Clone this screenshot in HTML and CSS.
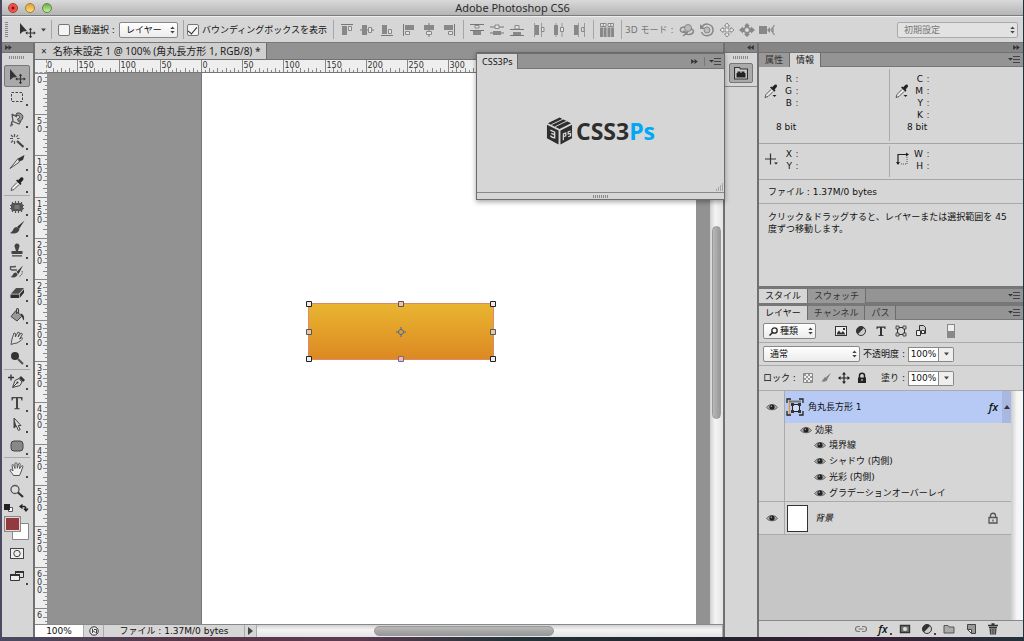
FILE: index.html
```html
<!DOCTYPE html>
<html lang="ja">
<head>
<meta charset="utf-8">
<title>Adobe Photoshop CS6</title>
<link rel="stylesheet" href="styles.css">
</head>
<body>
<svg class="defs" aria-hidden="true">
  <symbol id="i-move" viewBox="0 0 18 16"><path d="M2 1v11l3-2.600L9 9z" fill="#333"/><path d="M8.500 11h8M12.500 7v8" stroke="#333" stroke-width="1.200"/><path d="M12.500 5.800l-1.800 2h3.600zM12.500 16.200l-1.800-2h3.600zM7.300 11l2-1.800v3.600zM17.700 11l-2-1.800v3.600z" fill="#333"/></symbol>
  <symbol id="i-marquee" viewBox="0 0 18 16"><rect x="3.500" y="3.500" width="11" height="9" fill="none" stroke="#444" stroke-dasharray="2.500 1.500"/></symbol>
  <symbol id="i-lasso" viewBox="0 0 18 16"><path d="M4 3l5 3M4 3l1 7.500M5 10.500c-2 0-2 3 0 3.500M3.500 13l-1 2.500M5 10.500l6 2.500 2-3" fill="none" stroke="#555" stroke-width="1.300"/><path d="M7.500 4.500l1.500-2.500c7-1 8 7.500 1.500 8.500L9.500 8c3-1 2.500-4 .3-3.500z" fill="#999" stroke="#444"/></symbol>
  <symbol id="i-wand" viewBox="0 0 18 16"><path d="M9 8l6.500 6" stroke="#444" stroke-width="2.200"/><path d="M6.500 1v3M2 5.500h3M3 2l2 2M10 2L8.500 4M3 9.500l2-2M6.500 8v3M9 5.500h2.500" stroke="#555" stroke-width="1.200"/></symbol>
  <symbol id="i-slice" viewBox="0 0 18 16"><path d="M10 4.500L16.500 1l-1.500 5-4 1.500z" fill="#333"/><path d="M10 4.500L2 14.500 11.500 8z" fill="#e4e4e4" stroke="#555"/></symbol>
  <symbol id="i-dropper" viewBox="0 0 18 16"><path d="M9 6.500L4 11.500l-1 3 3-1 5-5" fill="#eee" stroke="#555"/><path d="M8 4.500l1.200-1 1 .8 2.300-2.600c2-1.500 4 .5 2.500 2.500L12.700 6.800l.8 1-1 1.200z" fill="#222"/></symbol>
  <symbol id="i-sample" viewBox="0 0 16 14"><path d="M8 5.500L3 10.500l-1 3 3-1 5-5" fill="#eee" stroke="#555"/><path d="M7 3.500l1.200-1 1 .8L11.300 1c2-1.500 3.500.5 2.200 2.200L11.700 5.500l.8 1-1 1.200z" fill="#222"/><path d="M9.500 11h4l-2 2z" fill="#222"/></symbol>
  <symbol id="i-heal" viewBox="0 0 18 16"><rect x="3" y="4" width="12" height="8" rx="2.500" fill="#555"/><path d="M4.500 3v10M7.500 2v12M10.500 2v12M13.500 3v10M2 6.500h14M2 9.500h14" stroke="#555" stroke-width="1.200"/><rect x="6.500" y="6" width="5" height="4" fill="#777"/></symbol>
  <symbol id="i-brush" viewBox="0 0 18 16"><path d="M16.500.5L9 7l2 2z" fill="#333"/><path d="M8.500 7c-3.500 0-2.500 4-6.500 6 4 1.500 9 0 9.500-4z" fill="#444"/></symbol>
  <symbol id="i-stamp" viewBox="0 0 18 16"><path d="M9 1.500a2.500 2.500 0 0 1 2.300 3.500L10 9h4.500v3h-11V9H8L6.700 5A2.500 2.500 0 0 1 9 1.500zM4 13.200h10v1.300H4z" fill="#444"/></symbol>
  <symbol id="i-history" viewBox="0 0 18 16"><path d="M15 1.500L8.500 8l2 2z" fill="#333"/><path d="M7.500 8.500c-2.500 0-2 3-5 4.500 4 1 6.500 0 7.300-3z" fill="#444"/><path d="M2 3l6-.5M3 6h6M2.500 2v4" fill="none" stroke="#555" stroke-width="1.300"/><path d="M14 7c1 3-1 5-3 5.500" fill="none" stroke="#555" stroke-dasharray="1.500 1"/></symbol>
  <symbol id="i-eraser" viewBox="0 0 18 16"><path d="M8 3h8l-5 5.700H3z" fill="#4c4c4c"/><path d="M2.500 9.500H11V13H2.500zM11.700 9.300l4.300-5v3.500L11.700 13z" fill="#2e2e2e"/></symbol>
  <symbol id="i-bucket" viewBox="0 0 18 16"><path d="M7.500 4L14 9l-5 5-6-4.500z" fill="#999" stroke="#444"/><path d="M8.500 7V3c0-2 2-2 2 0v3" fill="none" stroke="#444" stroke-width="1.200"/><path d="M12.500 6.500c3 .5 4 3 3.500 7-1.500-1-1.500-3.500-3.500-7z" fill="#333"/></symbol>
  <symbol id="i-smudge" viewBox="0 0 18 16"><path d="M3 15.500L4 10l2-6 1.500.5L7.300 8 10 3l1.700.8L10 8l3-4 1.600 1-3 5 2.400-1.500c1 .5.500 1.500-1 3l-4 2.500-3 .5z" fill="#ddd" stroke="#555"/></symbol>
  <symbol id="i-dodge" viewBox="0 0 18 16"><circle cx="7" cy="6" r="4" fill="#333"/><path d="M10 9l5 5" stroke="#555" stroke-width="2.200"/></symbol>
  <symbol id="i-pen" viewBox="0 0 18 16"><path d="M0 4.500h6M3 1.500v6" stroke="#333" stroke-width="1.300"/><path d="M4.500 14.500L7 7.500l4-2 3 3.500-2 3.500z" fill="#ddd" stroke="#444"/><path d="M11 5l2-2 4 4-2 2z" fill="#333"/><path d="M5 14l4-4" stroke="#444"/><circle cx="9.500" cy="9.500" r="1" fill="#333"/></symbol>
  <symbol id="i-type" viewBox="0 0 18 16"><path d="M3.500 2h11v3.500h-1L12.700 3.300H10V13l1.700.4v.8H6.300v-.8L8 13V3.300H5.300L4.500 5.500h-1z" fill="#444"/></symbol>
  <symbol id="i-typesmall" viewBox="0 0 12 12"><path d="M1.500 1.500h9V4h-.8L9 2.700H7V10l1.500.3v.7h-5v-.7L5 10V2.700H3L2.300 4h-.8z" fill="#333"/></symbol>
  <symbol id="i-select" viewBox="0 0 18 16"><path d="M6 2v10l2.400-2 2 4.500 1.800-.8-2-4.200H13z" fill="#ddd" stroke="#444"/><path d="M6 2v10l2.400-2z" fill="#444"/></symbol>
  <symbol id="i-rrect" viewBox="0 0 18 16"><rect x="3" y="3" width="12" height="10" rx="3" fill="#888" stroke="#444"/></symbol>
  <symbol id="i-hand" viewBox="0 0 18 16"><path d="M5.500 14.500c-1.500-3-3.500-4-3.500-5.500 1-1 2 0 3 1L4 4.500c0-1.300 1.500-1.300 1.800 0L7 7.500V2.700c0-1.400 1.800-1.400 2 0l.3 4.500L10.500 3c.5-1.200 2-.8 1.700.5l-.7 4.200L13.500 5c1-.8 1.800 0 1.300 1L13 11l-1.500 3.500z" fill="#eee" stroke="#555"/></symbol>
  <symbol id="i-zoom" viewBox="0 0 18 16"><circle cx="7" cy="6.500" r="4" fill="#ddd" stroke="#555" stroke-width="1.300"/><path d="M10 9.500l5 4.500" stroke="#333" stroke-width="2.200"/></symbol>
  <symbol id="i-mask" viewBox="0 0 18 16"><rect x="2.500" y="3.500" width="13" height="10" fill="#eee" stroke="#444"/><circle cx="9" cy="8.500" r="3.200" fill="none" stroke="#444"/></symbol>
  <symbol id="i-screen" viewBox="0 0 18 16"><path d="M7.500 3.500h8v6h-8z" fill="#ddd" stroke="#333"/><path d="M7 3h9v2H7z" fill="#333"/><path d="M2.500 6.500h9v6h-9z" fill="#eee" stroke="#333"/><path d="M2 6h10v2H2z" fill="#333"/></symbol>
  <symbol id="i-eye" viewBox="0 0 12 10"><path d="M.5 5.500C3 1.500 9 1.500 11.500 5.500 9 8.500 3 8.500.5 5.500z" fill="#aaa" stroke="#666"/><circle cx="6" cy="5" r="2.600" fill="#222"/><circle cx="5.300" cy="4.300" r=".8" fill="#aaa"/></symbol>
  <symbol id="i-menu" viewBox="0 0 13 9"><path d="M0 3h5L2.500 5.500z" fill="#333"/><path d="M5 1.500h7M5 4.500h7M5 7.500h7" stroke="#444"/></symbol>
  <symbol id="i-rr" viewBox="0 0 8 6"><path d="M0 0l4 3-4 3zM4 0l4 3-4 3z" fill="#333"/></symbol>
  <symbol id="i-ll" viewBox="0 0 8 6"><path d="M8 0L4 3l4 3zM4 0L0 3l4 3z" fill="#333"/></symbol>
  <symbol id="i-updown" viewBox="0 0 5 8"><path d="M.3 3h4.400L2.500 .5zM.3 5h4.400L2.500 7.500z" fill="#444"/></symbol>
  <symbol id="i-down" viewBox="0 0 5 4"><path d="M0 .5h5L2.500 3.500z" fill="#444"/></symbol>
  <symbol id="i-grip" viewBox="0 0 16 3"><path d="M0 1.500h16" stroke="#888" stroke-width="3" stroke-dasharray="1 1"/></symbol>
  <symbol id="i-align" viewBox="0 0 14 12"><path d="M1 .5h12" stroke="#777"/><path d="M2 2h5v9H2z" fill="#888"/><path d="M8.500 2.500h3v4h-3z" fill="#e4e4e4" stroke="#888"/></symbol>
  <symbol id="i-alignmid" viewBox="0 0 14 12"><path d="M0 6h14" stroke="#777"/><path d="M2 1h5v10H2z" fill="#888"/><path d="M8.500 3.500h3v5h-3z" fill="#e4e4e4" stroke="#888"/></symbol>
  <symbol id="i-dist" viewBox="0 0 14 12"><path d="M0 .5h14M0 6.500h14" stroke="#777"/><path d="M5 1.500h4v2.500H5z" fill="#e4e4e4" stroke="#888"/><path d="M3 7h8v4H3z" fill="#888"/></symbol>
  <symbol id="i-distmid" viewBox="0 0 14 12"><path d="M0 3h14M0 9h14" stroke="#777"/><path d="M5 1h4v3.500H5z" fill="#e4e4e4" stroke="#888"/><path d="M3 7h8v4H3z" fill="#888"/></symbol>
  <symbol id="i-distbot" viewBox="0 0 14 12"><path d="M0 5.500h14M0 11.500h14" stroke="#777"/><path d="M5 1.500h4v3.500H5z" fill="#e4e4e4" stroke="#888"/><path d="M3 8h8v3H3z" fill="#888"/></symbol>
  <symbol id="i-vdist" viewBox="0 0 12 14"><path d="M1.500 0v14M8.500 0v14" stroke="#999"/><path d="M2 2h4v10H2z" fill="#888"/><path d="M8.500 4.500h2.500v4H8.500z" fill="#e4e4e4" stroke="#888"/></symbol>
  <symbol id="i-vdistmid" viewBox="0 0 12 14"><path d="M3 0v14M9 0v14" stroke="#999"/><path d="M1 2h4v10H1z" fill="#888"/><path d="M7.500 4.500h3v4h-3z" fill="#e4e4e4" stroke="#888"/></symbol>
  <symbol id="i-vdistend" viewBox="0 0 12 14"><path d="M5.500 0v14M11.500 0v14" stroke="#999"/><path d="M1 2h4v10H1z" fill="#888"/><path d="M8.500 4.500H11v4H8.500z" fill="#e4e4e4" stroke="#888"/></symbol>
  <symbol id="i-auto" viewBox="0 0 14 14"><path d="M.5.500h5.500v3H.5zM8 .5h5.500v3H8zM3.300.5v3M10.800.5v3" fill="#e4e4e4" stroke="#888"/><path d="M0 4.500h3V14H0zM3.600 4.500h3V14h-3zM7.500 4.500h3V14h-3zM11.100 4.500H14V14h-2.900z" fill="#888"/></symbol>
  <symbol id="i-orbit" viewBox="0 0 16 14"><circle cx="9" cy="5" r="3.500" fill="#bbb" stroke="#888"/><path d="M6 4C0 4 0 9 5 9.500h4M12 6c4 1 3 5-2 5.500L6 11M4 8l4 2-4 3" fill="none" stroke="#888" stroke-width="1.500"/></symbol>
  <symbol id="i-roll" viewBox="0 0 16 14"><circle cx="8" cy="7" r="3" fill="#bbb" stroke="#888"/><path d="M3 4c3-5 11-3 11 3s-9 8-11.500 2" fill="none" stroke="#888" stroke-width="1.500"/><path d="M1 1v5h5z" fill="#888"/></symbol>
  <symbol id="i-pan" viewBox="0 0 16 14"><path d="M8 0l2.500 3H9v3h3V4.500L15 7l-3 2.500V8H9v3h1.500L8 14l-2.500-3H7V8H4v1.500L1 7l3-2.500V6h3V3H5.500z" fill="#eee" stroke="#888"/></symbol>
  <symbol id="i-slide" viewBox="0 0 16 14"><path d="M8 0l3 3H9.500l1.500 2h1V3.500L16 7l-4 3.500V9h-1l-1.500 2H11l-3 3-3-3h1.500L5 9H4v1.500L0 7l4-3.500V5h1l1.500-2H5z" fill="#888"/><circle cx="8" cy="7" r="2.500" fill="#ddd" stroke="#888"/></symbol>
  <symbol id="i-cam" viewBox="0 0 16 14"><path d="M0 3h8v8H0zM8 7l3-3v6z" fill="#888"/><path d="M15.500 2L12 7l3.500 5M14 5v4" fill="none" stroke="#888" stroke-width="1.200"/></symbol>
  <symbol id="i-pixel" viewBox="0 0 12 12"><rect x=".5" y="1.500" width="11" height="9" fill="#eee" stroke="#333"/><path d="M2 9.500V8l2-2.500L6 8l2-2 2.500 3.500zM8 3h2v2H8z" fill="#333"/></symbol>
  <symbol id="i-adjust" viewBox="0 0 12 12"><circle cx="6" cy="6" r="4.500" fill="#ccc" stroke="#333"/><path d="M2.800 9.200A4.500 4.500 0 0 1 9.200 2.800z" fill="#333"/></symbol>
  <symbol id="i-shape" viewBox="0 0 12 12"><path d="M2.500 2.500h7v7h-7z" fill="none" stroke="#333"/><path d="M1 1h3v3H1zM8 1h3v3H8zM1 8h3v3H1zM8 8h3v3H8z" fill="#ccc" stroke="#333" stroke-width=".8"/></symbol>
  <symbol id="i-smart" viewBox="0 0 12 12"><path d="M4.500.5h4l2 2v6h-6z" fill="#ccc" stroke="#333"/><path d="M1.500 5.500h4v5h-4zM6.500 5.500h3v3h-3z" fill="#eee" stroke="#333"/></symbol>
  <symbol id="i-checks" viewBox="0 0 12 12"><path d="M1.500 1.500h9v9h-9z" fill="#eee" stroke="#888"/><path d="M2 2h2v2H2zM6 2h2v2H6zM4 4h2v2H4zM8 4h2v2H8zM2 6h2v2H2zM6 6h2v2H6zM4 8h2v2H4zM8 8h2v2H8z" fill="#999"/></symbol>
  <symbol id="i-four" viewBox="0 0 12 12"><path d="M1 6h10M6 1v10" stroke="#222" stroke-width="1.200"/><path d="M6 0L4 2.500h4zM6 12L4 9.500h4zM0 6l2.500-2v4zM12 6L9.500 4v4z" fill="#222"/></symbol>
  <symbol id="i-lock" viewBox="0 0 12 12"><path d="M3.500 6V3.500c0-3 5-3 5 0V6" fill="none" stroke="#222" stroke-width="1.500"/><path d="M2 5.500h8V11H2z" fill="#222"/><circle cx="6" cy="8" r="1" fill="#aaa"/></symbol>
  <symbol id="i-lockline" viewBox="0 0 12 12"><path d="M3.500 5.500v-2c0-3 5-3 5 0v2M2 5.500h8V11H2zM6 7.500v2" fill="none" stroke="#555" stroke-width="1.300"/></symbol>
  <symbol id="i-link" viewBox="0 0 12 10"><path d="M5 2.500H3a2.500 2.500 0 0 0 0 5h2M7 2.500h2a2.500 2.500 0 0 1 0 5H7M3.500 5h5" fill="none" stroke="#777" stroke-width="1.200"/></symbol>
  <symbol id="i-addmask" viewBox="0 0 12 12"><path d="M1.500 2.500h9v7h-9z" fill="#777" stroke="#333" stroke-width="1.400"/><circle cx="6" cy="6" r="2" fill="#ddd"/></symbol>
  <symbol id="i-folder" viewBox="0 0 12 12"><path d="M1 10V2.500h4L6 4h5v6z" fill="#aaa" stroke="#555"/></symbol>
  <symbol id="i-new" viewBox="0 0 12 12"><path d="M2.500 1.500h8v9H6.500l-4-4z" fill="#999" stroke="#444"/><path d="M2.500 6.500h4v4z" fill="#eee" stroke="#444"/></symbol>
  <symbol id="i-trash" viewBox="0 0 12 12"><path d="M1 2.500h10M4.500 1h3M2 4.500h8" stroke="#333" stroke-width="1.300"/><path d="M2.500 5.500h7l-.5 6H3z" fill="#444"/><path d="M4.500 6v5M6 6v5M7.500 6v5" stroke="#aaa" stroke-width=".6"/></symbol>
</svg>
<div class="window">
  <header class="titlebar">
    <div class="lights"><button class="light red" aria-label="閉じる"></button><button class="light yellow" aria-label="しまう"></button><button class="light green" aria-label="拡大"></button></div>
    <h1>Adobe Photoshop CS6</h1>
  </header>
  <div class="options">
    <span class="vgrip"></span>
    <button class="current" aria-label="移動ツール"><svg class="tool-icon"><use href="#i-move"/></svg><svg class="down"><use href="#i-down"/></svg></button>
    <i class="sep"></i>
    <label class="check"><input type="checkbox">自動選択 :</label>
    <span class="pick target"><select aria-label="自動選択の対象"><option>レイヤー</option></select><svg class="updown"><use href="#i-updown"/></svg></span>
    <i class="sep"></i>
    <label class="check"><input type="checkbox" checked>バウンディングボックスを表示</label>
    <i class="sep"></i>
    <div class="icons">
      <button aria-label="上端揃え"><svg><use href="#i-align"/></svg></button><button aria-label="垂直方向中央揃え"><svg><use href="#i-alignmid"/></svg></button><button aria-label="下端揃え"><svg class="flip"><use href="#i-align"/></svg></button>
    </div>
    <div class="icons">
      <button aria-label="左端揃え"><svg class="back-turn"><use href="#i-align"/></svg></button><button aria-label="水平方向中央揃え"><svg class="back-turn"><use href="#i-alignmid"/></svg></button><button aria-label="右端揃え"><svg class="mirror"><use href="#i-align"/></svg></button>
    </div>
    <i class="sep"></i>
    <div class="icons">
      <button aria-label="上端を分布"><svg><use href="#i-dist"/></svg></button><button aria-label="垂直方向中央を分布"><svg><use href="#i-distmid"/></svg></button><button aria-label="下端を分布"><svg><use href="#i-distbot"/></svg></button>
    </div>
    <div class="icons upright">
      <button aria-label="左端を分布"><svg><use href="#i-vdist"/></svg></button><button aria-label="水平方向中央を分布"><svg><use href="#i-vdistmid"/></svg></button><button aria-label="右端を分布"><svg><use href="#i-vdistend"/></svg></button>
    </div>
    <i class="sep"></i>
    <div class="icons"><button aria-label="自動整列"><svg class="auto"><use href="#i-auto"/></svg></button></div>
    <i class="sep"></i>
    <span class="mode">3D モード :</span>
    <div class="icons three">
      <button aria-label="回転"><svg><use href="#i-orbit"/></svg></button><button aria-label="ロール"><svg><use href="#i-roll"/></svg></button><button aria-label="パン"><svg><use href="#i-pan"/></svg></button><button aria-label="スライド"><svg><use href="#i-slide"/></svg></button><button aria-label="ズーム"><svg><use href="#i-cam"/></svg></button>
    </div>
    <span class="pick workspace"><select aria-label="ワークスペース"><option>初期設定</option></select><svg class="updown"><use href="#i-updown"/></svg></span>
  </div>
  <div class="main">
    <nav class="tools">
      <div class="strip start"><svg class="arrows"><use href="#i-rr"/></svg></div>
      <svg class="grip"><use href="#i-grip"/></svg>
      <div class="group six">
        <button class="on" aria-label="移動"><svg class="tool-icon"><use href="#i-move"/></svg></button>
        <button class="more" aria-label="選択範囲"><svg class="tool-icon"><use href="#i-marquee"/></svg></button>
        <button class="more" aria-label="なげなわ"><svg class="tool-icon"><use href="#i-lasso"/></svg></button>
        <button class="more" aria-label="自動選択"><svg class="tool-icon"><use href="#i-wand"/></svg></button>
        <button class="more" aria-label="スライス"><svg class="tool-icon"><use href="#i-slice"/></svg></button>
        <button class="more" aria-label="スポイト"><svg class="tool-icon"><use href="#i-dropper"/></svg></button>
      </div>
      <div class="group eight">
        <button class="more" aria-label="修復"><svg class="tool-icon"><use href="#i-heal"/></svg></button>
        <button class="more" aria-label="ブラシ"><svg class="tool-icon"><use href="#i-brush"/></svg></button>
        <button class="more" aria-label="スタンプ"><svg class="tool-icon"><use href="#i-stamp"/></svg></button>
        <button class="more" aria-label="ヒストリーブラシ"><svg class="tool-icon"><use href="#i-history"/></svg></button>
        <button class="more" aria-label="消しゴム"><svg class="tool-icon"><use href="#i-eraser"/></svg></button>
        <button class="more" aria-label="塗りつぶし"><svg class="tool-icon"><use href="#i-bucket"/></svg></button>
        <button class="more" aria-label="指先"><svg class="tool-icon"><use href="#i-smudge"/></svg></button>
        <button class="more" aria-label="覆い焼き"><svg class="tool-icon"><use href="#i-dodge"/></svg></button>
      </div>
      <div class="group four">
        <button class="more" aria-label="ペン"><svg class="tool-icon"><use href="#i-pen"/></svg></button>
        <button class="more" aria-label="文字"><svg class="tool-icon"><use href="#i-type"/></svg></button>
        <button class="more" aria-label="パス選択"><svg class="tool-icon"><use href="#i-select"/></svg></button>
        <button class="more" aria-label="角丸長方形"><svg class="tool-icon"><use href="#i-rrect"/></svg></button>
      </div>
      <div class="group two">
        <button class="more" aria-label="手のひら"><svg class="tool-icon"><use href="#i-hand"/></svg></button>
        <button aria-label="ズーム"><svg class="tool-icon"><use href="#i-zoom"/></svg></button>
      </div>
      <svg class="swatches" viewBox="0 0 26 38"><path d="M4.500 4.500h4v4h-4z" fill="#fff" stroke="#555"/><path d="M0 1h6v6H0z" fill="#222"/><path d="M17 3.500h3q2 0 2 3M18.500 1.500l-2.500 2 2.500 2M20 5.500l2 2.500 2-2.500" fill="none" stroke="#222" stroke-width="1.300"/><path d="M8.500 20.500h16v16h-16z" fill="#fff" stroke="#888"/><path d="M.5 13.500h16v15H.5z" fill="#933a3e" stroke="#888"/><path d="M1.500 14.500h14v13h-14z" fill="none" stroke="#e8dada"/></svg>
      <div class="group last">
        <button aria-label="クイックマスク"><svg class="tool-icon"><use href="#i-mask"/></svg></button>
        <button class="more" aria-label="スクリーンモード"><svg class="tool-icon"><use href="#i-screen"/></svg></button>
      </div>
    </nav>
    <section class="document">
      <div class="doc-tabs"><div class="doc-tab"><button aria-label="閉じる">×</button><span>名称未設定 1 @ 100% (角丸長方形 1, RGB/8) *</span></div></div>
      <div class="work">
        <div class="corner"></div>
        <svg class="ruler-h" id="ruler-h"></svg>
        <svg class="ruler-v" id="ruler-v"></svg>
        <div class="viewport">
          <div class="paper">
            <div class="shape">
              <svg viewBox="0 0 192 63"><rect x="3.500" y="3.500" width="185" height="56" fill="none" stroke="#d98a70"/><g fill="#eee" stroke="#222"><path d="M1.500 1.500h5v5h-5zM185.500 1.500h5v5h-5zM1.500 56.500h5v5h-5zM185.500 56.500h5v5h-5z"/></g><g fill="#e8c9a0" stroke="#556"><path d="M93.500 1.500h5v5h-5zM1.500 29.500h5v5h-5zM185.500 29.500h5v5h-5z"/></g><path d="M93.500 56.500h5v5h-5z" fill="#e8c0b0" stroke="#8a6080"/><g fill="none" stroke="#456a9a"><circle cx="96" cy="32" r="2.500"/><path d="M96 27v3M96 34v3M91 32h3M98 32h3"/></g></svg>
            </div>
          </div>
        </div>
        <div class="scroll-v"><span></span></div>
      </div>
      <footer class="status">
        <input type="text" value="100%" aria-label="ズーム">
        <button class="clock" aria-label="履歴"><svg viewBox="0 0 10 10"><circle cx="5" cy="5" r="4.200" fill="#eee" stroke="#333"/><path d="M3.500 2.500v4.500M3.500 4.500l3 2M5 3.500h2.500v4" fill="none" stroke="#444"/></svg></button>
        <span class="size">ファイル : 1.37M/0 bytes</span>
        <button class="next" aria-label="表示項目"><svg viewBox="0 0 5 8"><path d="M0 0l5 4-5 4z" fill="#444"/></svg></button>
        <div class="scroll-h"><span></span></div>
      </footer>
      <aside class="float">
        <div class="tabs"><button class="tab on">CSS3Ps</button><span class="fill"></span><svg class="arrows"><use href="#i-rr"/></svg><i></i><svg class="menu"><use href="#i-menu"/></svg></div>
        <div class="float-body">
          <svg class="cube" viewBox="0 0 28 30"><path d="M14 1l12 6-12 6L2 7z" fill="#2e2e2e"/><path d="M1 8.500l12 6V29L1 22.500zM27 8.500l-12 6V29l12-6.500z" fill="#2e2e2e"/><path d="M5.500 8.500L18 2.500M9.500 10.500L22 4.500" stroke="#d6d6d6"/><path d="M4.500 14l4.500 2.200v6L6.500 21.500l-2-1.500M5.500 17.500l3.500 1.500" fill="none" stroke="#d6d6d6" stroke-width="1.400"/><path d="M18 24.500v-6.500l2.500-1v3L18 21M25.500 15l-2.500 1v2l2.500-.5v2.500L23 21" fill="none" stroke="#d6d6d6" stroke-width="1.300"/></svg>
          <strong>CSS3<em>Ps</em></strong>
          <svg class="resize" viewBox="0 0 8 8"><path d="M1 7h1M3 7h1M5 7h1M7 7h1M3 5h1M5 5h1M7 5h1M5 3h1M7 3h1M7 1h1" stroke="#777"/></svg>
        </div>
        <div class="float-foot"><svg class="grip"><use href="#i-grip"/></svg></div>
      </aside>
    </section>
    <div class="dock">
      <div class="strip end"><svg class="arrows"><use href="#i-ll"/></svg></div>
      <div class="dock-box"><svg class="grip"><use href="#i-grip"/></svg>
      <button class="dock-btn" aria-label="CSS3Ps"><svg viewBox="0 0 14 14"><path d="M.5 13V1.500h5l1 1.500h7v10z" fill="#ccc" stroke="#333" stroke-width="1.200"/><path d="M2.500 11.500V7h1V5.500h3V7h1V5.500h3V7h1v4.500z" fill="#222"/></svg></button></div>
    </div>
    <div class="panels">
      <div class="strip end"><svg class="arrows"><use href="#i-rr"/></svg></div>
      <section class="panel info">
        <div class="tabs"><button class="tab">属性</button><button class="tab on">情報</button><span class="fill"></span><svg class="menu"><use href="#i-menu"/></svg></div>
        <div class="readout colors">
          <div><svg class="pick-icon"><use href="#i-sample"/></svg><ul><li>R<b>:</b></li><li>G<b>:</b></li><li>B<b>:</b></li></ul><p>8 bit</p></div>
          <div><svg class="pick-icon"><use href="#i-sample"/></svg><ul><li>C<b>:</b></li><li>M<b>:</b></li><li>Y<b>:</b></li><li>K<b>:</b></li></ul><p>8 bit</p></div>
        </div>
        <div class="readout coords">
          <div><svg class="pick-icon" viewBox="0 0 16 14"><path d="M2 7h11M7.500 1.500v11" stroke="#333" stroke-width="1.200"/><path d="M11 10.500h4l-2 2z" fill="#222"/></svg><ul><li>X<b>:</b></li><li>Y<b>:</b></li></ul></div>
          <div><svg class="pick-icon" viewBox="0 0 16 14"><path d="M4 12V2.500h9" fill="none" stroke="#222" stroke-width="1.200"/><path d="M2 10h4l-2 3zM12 .5l3 2-3 2z" fill="#222"/><path d="M13 5v7H7" fill="none" stroke="#555" stroke-dasharray="1 1"/></svg><ul><li>W<b>:</b></li><li>H<b>:</b></li></ul></div>
        </div>
        <p class="file">ファイル : 1.37M/0 bytes</p>
        <p class="hint">クリック＆ドラッグすると、レイヤーまたは選択範囲を 45 度ずつ移動します。</p>
      </section>
      <section class="panel"><div class="tabs"><button class="tab on">スタイル</button><button class="tab">スウォッチ</button><span class="fill"></span><svg class="menu"><use href="#i-menu"/></svg></div></section>
      <section class="panel layers">
        <div class="tabs"><button class="tab on">レイヤー</button><button class="tab">チャンネル</button><button class="tab">パス</button><span class="fill"></span><svg class="menu"><use href="#i-menu"/></svg></div>
        <div class="row">
          <span class="pick kind"><svg class="lens" viewBox="0 0 9 9"><circle cx="5.500" cy="3.500" r="2.700" fill="none" stroke="#222" stroke-width="1.300"/><path d="M3.500 5.500L.5 8.500" stroke="#222" stroke-width="1.500"/></svg><select aria-label="フィルターの種類"><option>種類</option></select><svg class="updown"><use href="#i-updown"/></svg></span>
          <div class="filters"><svg><use href="#i-pixel"/></svg><svg><use href="#i-adjust"/></svg><svg><use href="#i-typesmall"/></svg><svg><use href="#i-shape"/></svg><svg><use href="#i-smart"/></svg></div>
          <button class="toggle" aria-label="フィルターの切り替え"></button>
        </div>
        <div class="row">
          <span class="pick blend"><select aria-label="描画モード"><option>通常</option></select><svg class="updown"><use href="#i-updown"/></svg></span>
          <label class="amount">不透明度 :<input type="text" value="100%"></label><button class="drop" aria-label="不透明度"><svg class="down"><use href="#i-down"/></svg></button>
        </div>
        <div class="row tall">
          <span class="locks">ロック :<svg><use href="#i-checks"/></svg><svg class="dim"><use href="#i-brush"/></svg><svg><use href="#i-four"/></svg><svg><use href="#i-lock"/></svg></span>
          <label class="amount">塗り :<input type="text" value="100%"></label><button class="drop" aria-label="塗り"><svg class="down"><use href="#i-down"/></svg></button>
        </div>
        <div class="stack">
          <div class="list">
            <div class="layer">
              <div class="eye-cell"><svg class="eye"><use href="#i-eye"/></svg></div>
              <div class="layer-body">
                <div class="layer-name selected">
                  <svg class="vector" viewBox="0 0 18 18"><path d="M1 5V1h4M13 1h4v4M17 13v4h-4M5 17H1v-4" fill="none" stroke="#222" stroke-width="1.300"/><path d="M3.500 2v14" stroke="#d9a03a" stroke-width="1.500"/><path d="M3 3.500h12" stroke="#777" stroke-width="2"/><path d="M6.500 6.500h7v7h-7z" fill="#cfdcf5" stroke="#222"/><path d="M5 5h3v3H5zM12 5h3v3h-3zM5 12h3v3H5zM12 12h3v3h-3z" fill="#333"/></svg>
                  <span>角丸長方形 1</span><b class="fx">fx</b><span class="fold"><svg viewBox="0 0 6 4"><path d="M0 4h6L3 0z" fill="#333"/></svg></span>
                </div>
                <ul class="effects">
                  <li class="head"><svg class="eye"><use href="#i-eye"/></svg>効果</li>
                  <li><svg class="eye"><use href="#i-eye"/></svg>境界線</li>
                  <li><svg class="eye"><use href="#i-eye"/></svg>シャドウ (内側)</li>
                  <li><svg class="eye"><use href="#i-eye"/></svg>光彩 (内側)</li>
                  <li><svg class="eye"><use href="#i-eye"/></svg>グラデーションオーバーレイ</li>
                </ul>
              </div>
            </div>
            <div class="layer">
              <div class="eye-cell"><svg class="eye"><use href="#i-eye"/></svg></div>
              <div class="layer-body"><div class="layer-name"><i class="thumb"></i><span class="back">背景</span><svg class="locked"><use href="#i-lockline"/></svg></div></div>
            </div>
          </div>
          <div class="list-scroll"></div>
        </div>
        <div class="actions">
          <button aria-label="リンク"><svg><use href="#i-link"/></svg></button><button class="style more" aria-label="スタイルを追加">fx</button><button aria-label="マスクを追加"><svg><use href="#i-addmask"/></svg></button><button class="more" aria-label="調整レイヤー"><svg><use href="#i-adjust"/></svg></button><button aria-label="グループ"><svg><use href="#i-folder"/></svg></button><button aria-label="新規レイヤー"><svg><use href="#i-new"/></svg></button><button aria-label="削除"><svg><use href="#i-trash"/></svg></button>
        </div>
      </section>
    </div>
  </div>
</div>
<script src="script.js"></script>
</body>
</html>
```

FILE: styles.css
```css
* { box-sizing: border-box; }
body {
  margin: 0;
  height: 100vh;
  overflow: hidden;
  padding: 0 1px 4px 2px;
  background: linear-gradient(90deg, #4a4a60, #5a3548 20%, #5b3a50 35%, #223338 50%, #24222c 70%, #3a2036 85%, #23323a);
  font: 9px/12px "DejaVu Sans", "Noto Sans CJK JP", sans-serif;
  color: #111;
}
button, input, select { font: inherit; color: inherit; margin: 0; padding: 0; border: 0; background: none; border-radius: 0; }
ul, p, h1 { margin: 0; padding: 0; list-style: none; }
svg { display: block; flex: none; }
.defs { position: absolute; width: 0; height: 0; }
.window { height: 100%; display: flex; flex-direction: column; background: #d6d6d6; }

.titlebar { display: grid; grid-template-columns: 1fr auto 1fr; align-items: center; height: 16px; background: linear-gradient(#dadada, #b4b4b4); border-bottom: 1px solid #7c7c7c; }
.titlebar h1 { font: 11px/14px "Noto Sans", sans-serif; color: #2a2a2a; }
.lights { display: flex; gap: 7px; padding-left: 6px; }
.light { width: 10px; height: 10px; border-radius: 50%; border: 1px solid #777; }
.red { background: radial-gradient(#8a1010 15%, #e8403a 30%, #f08078); border-color: #a33; }
.yellow { background: linear-gradient(#e2a030, #fbe08a); border-color: #a87a30; }
.green { background: linear-gradient(#6cae48, #cdf0a0); border-color: #5a8a40; }

.options { display: flex; align-items: center; height: 27px; padding: 0 5px 0 3px; border-top: 1px solid #eee; border-bottom: 1px solid #777; }
.vgrip { width: 3px; height: 15px; background: repeating-linear-gradient(#888 0 1px, transparent 1px 2px); }
.current { display: flex; align-items: center; gap: 5px; margin-left: 10px; }
.tool-icon { width: 18px; height: 16px; }
.down { width: 5px; height: 4px; }
.sep { width: 1px; height: 19px; flex: none; background: #a5a5a5; margin: 0 3px; }
.current + .sep { margin-left: 5px; }
.sep:first-of-type { margin-right: 6px; }
.check { display: flex; align-items: center; gap: 3px; white-space: nowrap; }
.check + .sep { margin-left: 6px; }
.check input { appearance: none; width: 12px; height: 12px; border: 1px solid #777; border-radius: 2px; background: #f4f4f4; display: grid; place-items: center; }
.check input:checked::after { content: ""; width: 4px; height: 8px; border: solid #222; border-width: 0 1px 1px 0; transform: rotate(40deg); }
.pick { display: grid; align-items: center; }
.pick > * { grid-area: 1 / 1; }
.pick select { appearance: none; width: 100%; height: 16px; line-height: 14px; padding-left: 6px; border: 1px solid #888; border-radius: 2px; background: linear-gradient(#fff, #ececec); }
.updown { width: 5px; height: 8px; justify-self: end; margin-right: 3px; pointer-events: none; }
.target { width: 59px; margin: 0 2px 0 4px; }
.icons { display: flex; margin-right: 2px; }
.icons + .sep { margin-left: 2px; }
.icons button { width: 20px; height: 18px; display: grid; place-items: center; }
.icons svg { width: 14px; height: 12px; }
.icons .auto { height: 14px; }
.icons.upright svg { width: 12px; height: 14px; }
.icons .flip { transform: scaleY(-1); }
.icons .back-turn { transform: rotate(-90deg) scaleX(-1); }
.icons .mirror { transform: rotate(90deg); }
.icons.three svg { width: 16px; height: 14px; }
.mode { color: #777; white-space: nowrap; margin-right: 4px; }
.workspace { width: 121px; margin-left: auto; color: #777; }
.workspace select { background: #e2e2e2; border-color: #aaa; }

.main { flex: 1; min-height: 0; display: flex; }
.strip { height: 10px; display: flex; align-items: center; background: #868686; border-bottom: 1px solid #707070; padding: 0 3px; }
.strip.end { justify-content: flex-end; }
.arrows { width: 7px; height: 5px; }
.grip { width: 16px; height: 3px; }

.tools { width: 33px; border-right: 2px solid #707070; display: flex; flex-direction: column; }
.tools > .grip { margin: 3px 0 6px 7px; }
.group { display: grid; grid-auto-rows: 1fr; margin: 0 3px 0 2px; border-bottom: 1px solid #aaa; }
.group button { display: grid; place-items: center; position: relative; }
.group .on { background: #a9a9a9; border: 1px solid #777; border-radius: 2px; }
.more::after { content: ""; position: absolute; right: 2px; bottom: 2px; width: 2px; height: 2px; background: #444; }
.six { height: 131px; }
.eight { height: 174px; }
.four { height: 88px; }
.two { height: 44px; border: 0; }
.last { height: 46px; border: 0; }
.swatches { width: 26px; height: 38px; margin: 1px 0 0 2px; }

.document { position: relative; flex: 1; min-width: 0; display: flex; flex-direction: column; border-right: 2px solid #707070; }
.doc-tabs { display: flex; height: 17px; background: #929292; border-bottom: 1px solid #707070; }
.doc-tab { display: flex; align-items: center; gap: 6px; padding: 0 6px; background: #cfcfcf; border-right: 1px solid #6c6c6c; font: 10px/14px "Noto Sans", "Noto Sans CJK JP", sans-serif; white-space: nowrap; color: #222; }
.work { flex: 1; min-height: 0; display: grid; grid-template: 13px 1fr / 12px 1fr 13px; background: #eee; }
.corner { border: 1px dashed #999; border-width: 0 1px 1px 0; }
.ruler-h { grid-column: 2 / 4; width: 100%; height: 13px; border-bottom: 1px solid #777; }
.ruler-v { width: 12px; height: 100%; min-height: 0; }
.num { font: 8px "DejaVu Sans", sans-serif; }
.viewport { background: #929292; padding: 0 14px 0 154px; min-height: 0; }
.paper { height: 100%; background: #fff; position: relative; border-left: 1px solid #777; }
.shape { position: absolute; left: 107px; top: 231px; width: 185px; height: 56px; background: linear-gradient(#e9b531, #dc8821); }
.shape svg { width: 192px; height: 63px; margin: -4px; }
.scroll-v { background: linear-gradient(90deg, #d0d0d0, #f4f4f4 40%, #e4e4e4); padding: 153px 2px 0; }
.scroll-v span { display: block; height: 193px; border-radius: 5px; border: 1px solid #999; background: linear-gradient(90deg, #b8b8b8, #999); }
.status { display: flex; height: 13px; background: #d6d6d6; border-top: 1px solid #888; }
.status input { width: 49px; background: #fff; text-align: center; }
.status > * { border-right: 1px solid #aaa; }
.clock { width: 20px; display: grid; place-items: center; }
.clock svg { width: 10px; height: 10px; }
.size { width: 141px; text-align: center; }
.next { width: 12px; display: grid; place-items: center; }
.next svg { width: 5px; height: 8px; }
.scroll-h { flex: 1; background: linear-gradient(#d0d0d0, #f4f4f4 40%, #e4e4e4); padding: 1px 0 0 117px; }
.scroll-h span { display: block; width: 180px; height: 10px; border-radius: 5px; border: 1px solid #999; background: linear-gradient(#b8b8b8, #999); }

.tabs { display: flex; align-items: center; height: 14px; background: #949494; border-bottom: 1px solid #777; }
.tab { height: 14px; align-self: flex-start; padding: 0 6px; border-right: 1px solid #6c6c6c; background: #999; color: #333; white-space: nowrap; }
.tab.on { background: #d6d6d6; color: #111; }
.fill { flex: 1; }
.menu { width: 13px; height: 9px; margin-right: 2px; }
.float { position: absolute; top: 9px; right: -2px; width: 249px; height: 148px; display: flex; flex-direction: column; background: #d6d6d6; border: 1px solid #6c6c6c; border-top-width: 2px; box-shadow: 0 2px 5px rgba(0,0,0,.35); }
.float .tabs, .float .tab { height: 15px; }
.float .tab { font-family: "Noto Sans", sans-serif; padding: 0 5px; }
.float .tabs i { width: 1px; height: 9px; background: #777; margin: 0 4px 0 6px; }
.float-body { flex: 1; display: flex; align-items: center; justify-content: center; gap: 3px; position: relative; }
.float-body strong { font: 700 23px/28px "Open Sans", sans-serif; color: #2e2e2e; }
.float-body em { font-style: normal; color: #00a8f8; }
.cube { width: 27px; height: 30px; }
.resize { position: absolute; right: 1px; bottom: 1px; width: 8px; height: 8px; }
.float-foot { height: 7px; border-top: 1px solid #888; display: grid; place-items: center; }

.dock { width: 34px; border-right: 2px solid #707070; }
.dock-box { height: 34px; display: flex; flex-direction: column; align-items: center; gap: 4px; padding-top: 3px; border-bottom: 1px solid #888; }
.dock-btn { width: 24px; height: 20px; display: grid; place-items: center; background: #aaa; border: 1px solid #777; border-radius: 2px; }
.dock-btn svg { width: 14px; height: 14px; }

.panels { width: 264px; display: flex; flex-direction: column; }
.panel { border-bottom: 3px solid #777; }
.readout { display: grid; grid-template-columns: 130px 1fr; border-bottom: 1px solid #a5a5a5; }
.readout > div { display: grid; grid-template-columns: 16px 1fr; align-content: start; margin: 2px 0; padding: 4px 0 0 4px; }
.readout > div + div { border-left: 1px solid #aaa; }
.colors { height: 77px; }
.coords { height: 36px; }
.readout .pick-icon { width: 16px; height: 14px; margin-top: 11px; }
.coords .pick-icon { margin-top: 4px; }
.coords > div { padding-top: 2px; }
.readout li { display: grid; grid-template-columns: 13px 10px; justify-items: end; }
.readout b { font-weight: 400; justify-self: center; color: #444; }
.readout p { grid-column: 1 / 3; padding-left: 13px; }
.colors > div { grid-template-rows: 48px 12px; }
.file { height: 24px; padding: 6px 9px; border-bottom: 1px solid #aaa; }
.hint { height: 82px; padding: 7px 9px; }
.layers { flex: 1; min-height: 0; display: flex; flex-direction: column; border: 0; }
.row { display: flex; align-items: center; height: 23px; padding-left: 4px; border-bottom: 1px solid #aaa; }
.row.tall { height: 25px; }
.kind { width: 53px; }
.kind .lens { width: 9px; height: 9px; margin-left: 6px; z-index: 1; }
.kind select { padding-left: 16px; }
.filters { display: flex; gap: 8px; margin-left: 19px; }
.filters svg { width: 12px; height: 12px; }
.toggle { width: 8px; height: 14px; margin-left: 20px; border: 1px solid #888; background: linear-gradient(#eee 50%, #888 50%); }
.blend { width: 97px; }
.amount { display: flex; align-items: center; gap: 3px; margin-left: auto; white-space: nowrap; }
.amount input { width: 31px; height: 15px; background: #fff; border: 1px solid #888; text-align: center; }
.drop { width: 15px; height: 15px; display: grid; place-items: center; background: #eee; border: 1px solid #888; border-left: 0; border-radius: 0 2px 2px 0; margin-right: 69px; }
.locks { display: flex; align-items: center; gap: 6px; }
.locks svg { width: 12px; height: 12px; }
.locks .dim { opacity: .6; }
.stack { flex: 1; min-height: 0; display: flex; background: #c6c6c6; }
.list { flex: 1; }
.list-scroll { width: 12px; background: linear-gradient(90deg, #ccc, #f6f6f6 50%); }
.layer { display: flex; background: #d6d6d6; border-bottom: 1px solid #aaa; }
.eye-cell { width: 26px; border-right: 1px solid #aaa; padding: 11px 0 0 7px; }
.eye { width: 12px; height: 10px; }
.layer-body { flex: 1; }
.layer-name { display: flex; align-items: center; height: 32px; padding-left: 1px; gap: 4px; }
.selected { background: #b7caf5; }
.vector { width: 18px; height: 18px; }
.fx { margin-left: auto; }
.fx, .actions .style { font: italic 600 11px/12px "Open Sans", sans-serif; }
.fold { width: 9px; height: 100%; background: #a8b8e0; display: grid; place-items: center; }
.fold svg { width: 6px; height: 4px; }
.thumb { width: 21px; height: 27px; border: 1px solid #333; background: #fff; margin: 0 3px 0 1px; }
.back { font-style: italic; }
.locked { width: 12px; height: 12px; margin: 0 12px 0 auto; }
.effects { height: 78px; }
.effects li { display: flex; align-items: center; gap: 3px; height: 16px; padding-left: 29px; }
.effects .head { height: 14px; padding-left: 15px; }
.actions { display: flex; align-items: center; gap: 8px; height: 17px; padding-left: 95px; border-top: 1px solid #888; }
.actions button { width: 14px; height: 14px; display: grid; place-items: center; position: relative; }
.actions svg { width: 12px; height: 12px; }
.actions .more::after { right: -2px; bottom: 1px; }
```

FILE: script.js
```js
const NS = "http://www.w3.org/2000/svg";
const SCALE = 0.8235;

function line(svg, x1, y1, x2, y2) {
  const el = document.createElementNS(NS, "path");
  el.setAttribute("d", `M${x1} ${y1}L${x2} ${y2}`);
  el.setAttribute("stroke", "#888");
  svg.append(el);
}

function label(svg, x, y, text) {
  const el = document.createElementNS(NS, "text");
  el.setAttribute("x", x);
  el.setAttribute("y", y);
  el.setAttribute("class", "num");
  el.setAttribute("fill", "#333");
  el.textContent = text;
  svg.append(el);
}

function drawHorizontal(svg, origin) {
  for (let v = -180; v < 350; v += 5) {
    const x = Math.round(origin + v * SCALE) + 0.5;
    const major = v % 50 === 0;
    line(svg, x, major ? 0 : v % 10 ? 10 : 8, x, 12);
    if (major) label(svg, x + 1, 8, Math.abs(v));
  }
  label(svg, 0, 8, "0");
}

function drawVertical(svg, origin) {
  for (let v = 0; v < 680; v += 5) {
    const y = Math.round(origin + v * SCALE) + 0.5;
    const major = v % 50 === 0;
    line(svg, major ? 0 : v % 10 ? 10 : 8, y, 12, y);
    if (major) [...String(v)].slice(0, v < 650 ? 3 : 1).forEach((c, i) => label(svg, 2, y + 9 + i * 8, c));
  }
}

drawHorizontal(document.getElementById("ruler-h"), 154);
drawVertical(document.getElementById("ruler-v"), 0);
```
